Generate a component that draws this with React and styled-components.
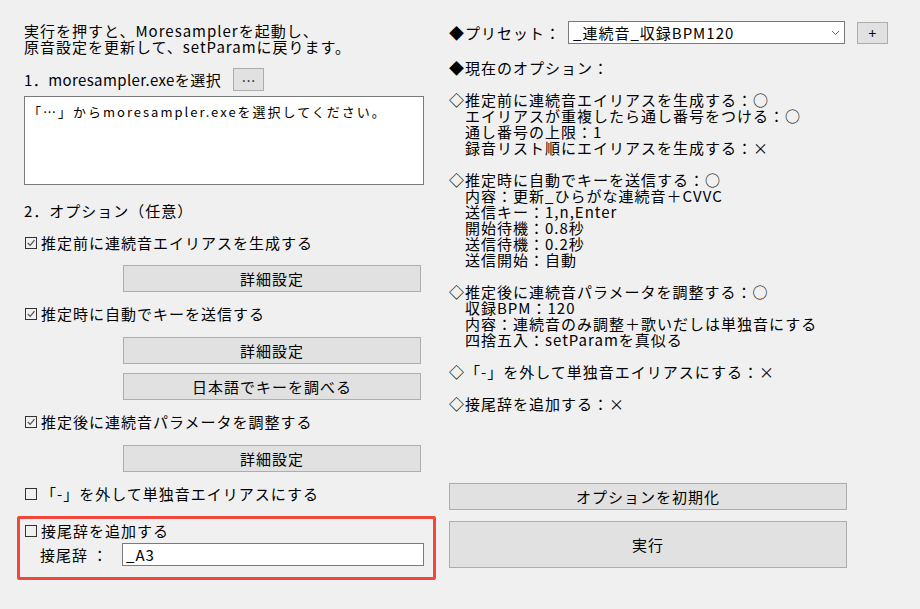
import React from 'react';
import styled, { createGlobalStyle } from 'styled-components';

const GlobalStyle = createGlobalStyle`
  html, body {
    margin: 0;
    padding: 0;
    background: #f0f0f0;
  }
  body {
    font-family: "Noto Sans CJK JP", "Noto Sans", sans-serif;
    font-size: 15px;
    line-height: 16px;
    letter-spacing: 1px;
    color: #000;
  }
`;

const Window = styled.div`
  width: 920px;
  height: 609px;
  box-sizing: border-box;
  padding: 21px 0 0 24px;
  display: grid;
  grid-template-columns: 400px 439px;
  column-gap: 25px;
  align-items: start;
`;

const LeftPane = styled.div`
  display: flex;
  flex-direction: column;
  align-items: flex-start;
`;

const RightPane = styled.div`
  display: flex;
  flex-direction: column;
`;

const Intro = styled.div`
  margin-top: 2px;
  white-space: pre-line;
`;

const PickRow = styled.div`
  display: flex;
  align-items: center;
  gap: 12px;
  height: 23px;
  margin-top: 13px;
  white-space: nowrap;
`;

const PickLabel = styled.span`
  letter-spacing: 0.4px;
`;

const Button = styled.button`
  box-sizing: border-box;
  border: 1px solid #adadad;
  background: #e1e1e1;
  color: #000;
  font-family: inherit;
  font-size: 15px;
  line-height: 16px;
  letter-spacing: 1px;
  padding: 0;
  margin: 0;
  cursor: default;
`;

const SmallButton = styled(Button)`
  width: 31px;
  height: ${({ $h }) => $h || 23}px;
  font-size: 14px;
  letter-spacing: 0;
`;

const TextBox = styled.div`
  box-sizing: border-box;
  width: 400px;
  height: 89px;
  margin-top: 5px;
  padding: 8px 0 0 3px;
  border: 1px solid #7a7a7a;
  background: #fff;
  font-size: 13px;
  line-height: 13px;
  letter-spacing: 2px;
`;

const Heading = styled.div`
  margin-top: 18px;
`;

const CheckRow = styled.label`
  display: flex;
  align-items: center;
  gap: 1px;
  height: 16px;
  margin-top: ${({ $mt }) => $mt}px;
  white-space: nowrap;
`;

const WideButton = styled(Button)`
  width: 298px;
  height: 27px;
  margin-left: 99px;
  margin-top: ${({ $mt }) => $mt}px;
`;

const Highlight = styled.div`
  align-self: stretch;
  margin: 14px -12px 0 -7px;
  padding: 4px 9px 11px 4px;
  border: 3px solid #f0463c;
  border-radius: 2px;
`;

const SuffixRow = styled.div`
  display: grid;
  grid-template-columns: 98px 1fr;
  align-items: center;
  margin-top: 4px;
`;

const SuffixLabel = styled.span`
  padding-left: 16px;
  white-space: nowrap;
`;

const TextInput = styled.div`
  box-sizing: border-box;
  height: 23px;
  padding: 0 3px;
  display: flex;
  align-items: center;
  border: 1px solid #7a7a7a;
  background: #fff;
`;

const PresetRow = styled.div`
  display: grid;
  grid-template-columns: 107px 277px 31px;
  column-gap: 12px;
  align-items: center;
  white-space: nowrap;
`;

const Combo = styled.div`
  box-sizing: border-box;
  height: 23px;
  padding: 0 4px;
  display: flex;
  align-items: center;
  justify-content: space-between;
  border: 1px solid #7a7a7a;
  background: #fff;
`;

const Options = styled.div`
  margin-top: 16px;
`;

const OptLine = styled.div`
  height: 16px;
  padding-left: ${({ $indent }) => ($indent ? 16 : 0)}px;
  white-space: pre;
`;

const Actions = styled.div`
  display: flex;
  flex-direction: column;
  gap: 11px;
  margin-top: 71px;
`;

const ActionButton = styled(Button)`
  width: 398px;
  height: ${({ $h }) => $h}px;
`;

const CheckBox = ({ checked }) => (
  <svg width="16" height="16" viewBox="0 0 16 16">
    <rect x="1.5" y="2.5" width="11" height="11" fill="none" stroke="#333" strokeWidth="1" />
    {checked && (
      <polyline points="3.8,8 6.2,10.4 10.5,5.2" fill="none" stroke="#555" strokeWidth="1.3" />
    )}
  </svg>
);

const Chevron = () => (
  <svg width="9" height="6" viewBox="0 0 9 6">
    <polyline points="1,1 4.5,4.5 8,1" fill="none" stroke="#666" strokeWidth="1" />
  </svg>
);

const options = [
  ['◆現在のオプション：'],
  [''],
  ['◇推定前に連続音エイリアスを生成する：○'],
  ['エイリアスが重複したら通し番号をつける：○', true],
  ['通し番号の上限：1', true],
  ['録音リスト順にエイリアスを生成する：×', true],
  [''],
  ['◇推定時に自動でキーを送信する：○'],
  ['内容：更新_ひらがな連続音＋CVVC', true],
  ['送信キー：1,n,Enter', true],
  ['開始待機：0.8秒', true],
  ['送信待機：0.2秒', true],
  ['送信開始：自動', true],
  [''],
  ['◇推定後に連続音パラメータを調整する：○'],
  ['収録BPM：120', true],
  ['内容：連続音のみ調整＋歌いだしは単独音にする', true],
  ['四捨五入：setParamを真似る', true],
  [''],
  ['◇「-」を外して単独音エイリアスにする：×'],
  [''],
  ['◇接尾辞を追加する：×'],
];

export default function App() {
  return (
    <>
      <GlobalStyle />
      <Window>
        <LeftPane>
          <Intro>{'実行を押すと、Moresamplerを起動し、\n原音設定を更新して、setParamに戻ります。'}</Intro>
          <PickRow>
            <PickLabel>1．moresampler.exeを選択</PickLabel>
            <SmallButton>…</SmallButton>
          </PickRow>
          <TextBox>「…」からmoresampler.exeを選択してください。</TextBox>
          <Heading>2．オプション（任意）</Heading>

          <CheckRow $mt={16}>
            <CheckBox checked />
            推定前に連続音エイリアスを生成する
          </CheckRow>
          <WideButton $mt={14}>詳細設定</WideButton>

          <CheckRow $mt={14}>
            <CheckBox checked />
            推定時に自動でキーを送信する
          </CheckRow>
          <WideButton $mt={15}>詳細設定</WideButton>
          <WideButton $mt={9}>日本語でキーを調べる</WideButton>

          <CheckRow $mt={14}>
            <CheckBox checked />
            推定後に連続音パラメータを調整する
          </CheckRow>
          <WideButton $mt={15}>詳細設定</WideButton>

          <CheckRow $mt={14}>
            <CheckBox />
            「-」を外して単独音エイリアスにする
          </CheckRow>

          <Highlight>
            <CheckRow $mt={0}>
              <CheckBox />
              接尾辞を追加する
            </CheckRow>
            <SuffixRow>
              <SuffixLabel>接尾辞 ：</SuffixLabel>
              <TextInput>_A3</TextInput>
            </SuffixRow>
          </Highlight>
        </LeftPane>

        <RightPane>
          <PresetRow>
            <span>◆プリセット：</span>
            <Combo>
              <span>_連続音_収録BPM120</span>
              <Chevron />
            </Combo>
            <SmallButton $h={22}>+</SmallButton>
          </PresetRow>
          <Options>
            {options.map(([text, indent], i) => (
              <OptLine key={i} $indent={indent}>{text}</OptLine>
            ))}
          </Options>
          <Actions>
            <ActionButton $h={27}>オプションを初期化</ActionButton>
            <ActionButton $h={47}>実行</ActionButton>
          </Actions>
        </RightPane>
      </Window>
    </>
  );
}
